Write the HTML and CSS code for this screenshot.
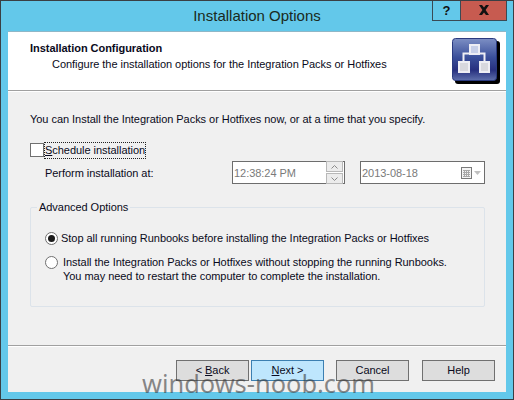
FILE: index.html
```html
<!DOCTYPE html>
<html lang="en">
<head>
    <meta charset="UTF-8">
    <title>Installation Options</title>
    <link rel="stylesheet" href="styles.css">
</head>
<body>
    <div class="window">
        <div class="titlebar">
            <span></span>
            <div class="title">Installation Options</div>
            <div class="caption-btns">
                <div class="cap-btn help-cap">?</div>
                <div class="cap-btn close-cap">
                    <svg width="12" height="10" viewBox="0 0 12 10"><path d="M1 0h3l2 2.5L8 0h3L7.6 5 11 10H8L6 7.500 4 10H1l3.400-5z" fill="#111"/></svg>
                </div>
            </div>
        </div>

        <div class="client">
            <!-- Cabecera blanca -->
            <div class="header">
                <div class="header-text">
                    <div class="header-title">Installation Configuration</div>
                    <div class="header-sub">Configure the installation options for the Integration Packs or Hotfixes</div>
                </div>
                <svg class="header-icon" width="49" height="46" viewBox="0 0 49 46">
                    <defs>
                        <linearGradient id="tile" x1="0" y1="0" x2="0" y2="1">
                            <stop offset="0" stop-color="#7d8fc4"/>
                            <stop offset="0.45" stop-color="#3a4f9a"/>
                            <stop offset="0.75" stop-color="#27307f"/>
                            <stop offset="1" stop-color="#5f70ac"/>
                        </linearGradient>
                    </defs>
                    <rect x="3" y="3" width="45" height="43" rx="3" fill="#000"/>
                    <rect x="0.500" y="0.500" width="44" height="42" rx="3" fill="url(#tile)" stroke="#2a3a80"/>
                    <path d="M11.500 24V15.500H32.500V24" fill="none" stroke="#eeeef4" stroke-width="2"/>
                    <rect x="18" y="7" width="9" height="9" fill="#c8d0e8" stroke="#eeeef4" stroke-width="2"/>
                    <rect x="7" y="24" width="10" height="10" fill="#d8d8de" stroke="#eeeef4" stroke-width="2"/>
                    <rect x="28" y="24" width="9" height="10" fill="#d8d8de" stroke="#eeeef4" stroke-width="2"/>
                </svg>
            </div>

            <div class="main">
                <p class="intro">You can Install the Integration Packs or Hotfixes now, or at a time that you specify.</p>

                <div class="check-row">
                    <span class="checkbox"></span>
                    <span class="focus-label"><u>S</u>chedule installation</span>
                </div>

                <div class="when-row">
                    <span class="when-label">Perform installation at:</span>
                    <div class="field time-field">
                        <span>12:38:24 PM</span>
                        <div class="spinner">
                            <div class="spin-btn"><svg width="7" height="4" viewBox="0 0 7 4"><path d="M0.500 3.500l3-3 3 3" fill="none" stroke="#8a8a8a"/></svg></div>
                            <div class="spin-btn"><svg width="7" height="4" viewBox="0 0 7 4"><path d="M0.500 0.500l3 3 3-3" fill="none" stroke="#8a8a8a"/></svg></div>
                        </div>
                    </div>
                    <div class="field date-field">
                        <span>2013-08-18</span>
                        <div class="date-icons">
                            <svg width="11" height="12" viewBox="0 0 11 12">
                                <rect x="0.500" y="0.500" width="10" height="11" fill="#f4f4f4" stroke="#7a7a7a"/>
                                <path d="M2 3.500h7M2 5.500h7M2 7.500h7M2 9.500h7M3.500 3v7M5.500 3v7M7.500 3v7" stroke="#a8a8a8"/>
                            </svg>
                            <svg width="7" height="4" viewBox="0 0 7 4"><path d="M0 0h7L3.500 4z" fill="#c0c0c0"/></svg>
                        </div>
                    </div>
                </div>

                <div class="group">
                    <div class="legend">Advanced Options</div>
                    <div class="radio-row first">
                        <span class="radio checked"></span>
                        <span>Stop all running Runbooks before installing the Integration Packs or Hotfixes</span>
                    </div>
                    <div class="radio-row second">
                        <span class="radio"></span>
                        <span>Install the Integration Packs or Hotfixes without stopping the running Runbooks.<br>You may need to restart the computer to complete the installation.</span>
                    </div>
                </div>
            </div>

            <div class="footer">
                <div class="btn">&lt; <u>B</u>ack</div>
                <div class="btn btn-default"><u>N</u>ext &gt;</div>
                <div class="btn btn-cancel">Cancel</div>
                <div class="btn btn-help">Help</div>
            </div>
        </div>

        <div class="watermark">windows-noob.com</div>
    </div>
</body>
</html>
```

FILE: styles.css
```css
body {
    margin: 0;
    font-family: "Liberation Sans", Arial, sans-serif;
    font-size: 11px;
    letter-spacing: -0.04px;
    color: #0a0a20;
}

.window {
    position: relative;
    width: 514px;
    height: 400px;
    box-sizing: border-box;
    border: 1px solid #3a3f44;
    background-color: #63c8ea;
    display: flex;
    flex-direction: column;
    overflow: hidden;
}

.titlebar {
    height: 30px;
    flex: none;
    display: grid;
    grid-template-columns: 1fr auto 1fr;
}

.title {
    font-size: 15px;
    letter-spacing: 0;
    line-height: 29px;
    color: #1a2a20;
}

.caption-btns {
    justify-self: end;
    display: flex;
    height: 21px;
    margin-top: -1px;
    margin-right: 6px;
    border: 1px solid #3a4a55;
    border-top: none;
    box-sizing: border-box;
}

.cap-btn {
    display: flex;
    justify-content: center;
    align-items: center;
    font-weight: bold;
    font-size: 13px;
    color: #111;
}

.help-cap {
    width: 27px;
    border-right: 1px solid #3a4a55;
}

.close-cap {
    width: 45px;
    background-color: #c75b50;
}

/* Area cliente */
.client {
    flex: 1;
    margin: 0 7px 7px 7px;
    background-color: #f0f0f0;
    display: flex;
    flex-direction: column;
    border-top: 1px solid #8fb7c7;
}

.header {
    height: 52px;
    flex: none;
    background-color: #ffffff;
    border-bottom: 1px solid #a0a0a0;
    box-shadow: 0 1px 0 #ffffff;
    display: flex;
    justify-content: space-between;
    padding: 6px 5px 0 22px;
}

.header-title {
    font-weight: bold;
    line-height: 16px;
    margin-top: 2px;
}

.header-sub {
    margin-left: 22px;
    line-height: 16px;
}

.header-icon {
    flex: none;
}

.main {
    flex: 1;
    padding: 20px 21px 0 22px;
}

.intro {
    margin: 0 0 15px 0;
    line-height: 16px;
}

.check-row {
    display: flex;
    align-items: center;
    height: 16px;
}

.checkbox {
    width: 12px;
    height: 12px;
    background-color: #ffffff;
    border: 1px solid #707070;
    margin-right: 1px;
}

.focus-label {
    outline: 1px dotted #222;
    line-height: 15px;
}

.when-row {
    display: flex;
    align-items: center;
    margin-top: 3px;
    padding-left: 15px;
}

.when-label {
    width: 187px;
}

.field {
    height: 23px;
    box-sizing: border-box;
    border: 1px solid #6d6d6d;
    background-color: #ffffff;
    color: #7a7a7a;
    display: flex;
    align-items: center;
    justify-content: space-between;
    padding-left: 1px;
}

.time-field {
    width: 113px;
    margin-right: 15px;
}

.date-field {
    width: 125px;
}

.spinner {
    width: 17px;
    margin-right: 1px;
    display: flex;
    flex-direction: column;
    gap: 1px;
}

.spin-btn {
    height: 9px;
    border: 1px solid #b8b8b8;
    background-color: #ececec;
    display: flex;
    justify-content: center;
    align-items: center;
}

.date-icons {
    display: flex;
    align-items: center;
    gap: 2px;
    margin-right: 3px;
}

.group {
    position: relative;
    height: 100px;
    margin-top: 23px;
    box-sizing: border-box;
    border: 1px solid #dce3ea;
    border-radius: 2px;
    padding: 0 14px;
}

.legend {
    position: absolute;
    top: -9px;
    left: 6px;
    padding: 0 2px;
    line-height: 16px;
    background-color: #f0f0f0;
}

.radio-row {
    display: flex;
    align-items: flex-start;
    line-height: 14px;
    margin-top: 10px;
}

.radio-row.first {
    margin-top: 23px;
}

.radio {
    width: 11px;
    height: 11px;
    flex: none;
    margin: 1px 3px 0 0;
    border: 1px solid #707070;
    border-radius: 50%;
    background-color: #ffffff;
    position: relative;
}

.radio-row.second .radio {
    margin-right: 5px;
}

.radio.checked::after {
    content: "";
    position: absolute;
    left: 2px;
    top: 2px;
    width: 7px;
    height: 7px;
    border-radius: 50%;
    background-color: #1a1a1a;
}

.footer {
    height: 47px;
    flex: none;
    border-top: 1px solid #a0a0a0;
    box-shadow: inset 0 1px 0 #ffffff;
    box-sizing: border-box;
    padding: 14px 0 0 168px;
    display: flex;
}

.btn {
    width: 73px;
    height: 21px;
    box-sizing: border-box;
    border: 1px solid #707070;
    background-color: #dddddd;
    text-align: center;
    line-height: 19px;
    margin-right: 2px;
}

.btn-default {
    border-color: #3c7fb1;
    background-color: #bee6fd;
    margin-right: 12px;
}

.btn-cancel {
    margin-right: 13px;
}

/* Marca de agua encima de todo */
.watermark {
    position: absolute;
    left: 141px;
    top: 366px;
    font-family: "Noto Sans", sans-serif;
    font-size: 25.4px;
    letter-spacing: 0;
    line-height: 32px;
    color: rgba(60, 60, 60, 0.6);
}
```
